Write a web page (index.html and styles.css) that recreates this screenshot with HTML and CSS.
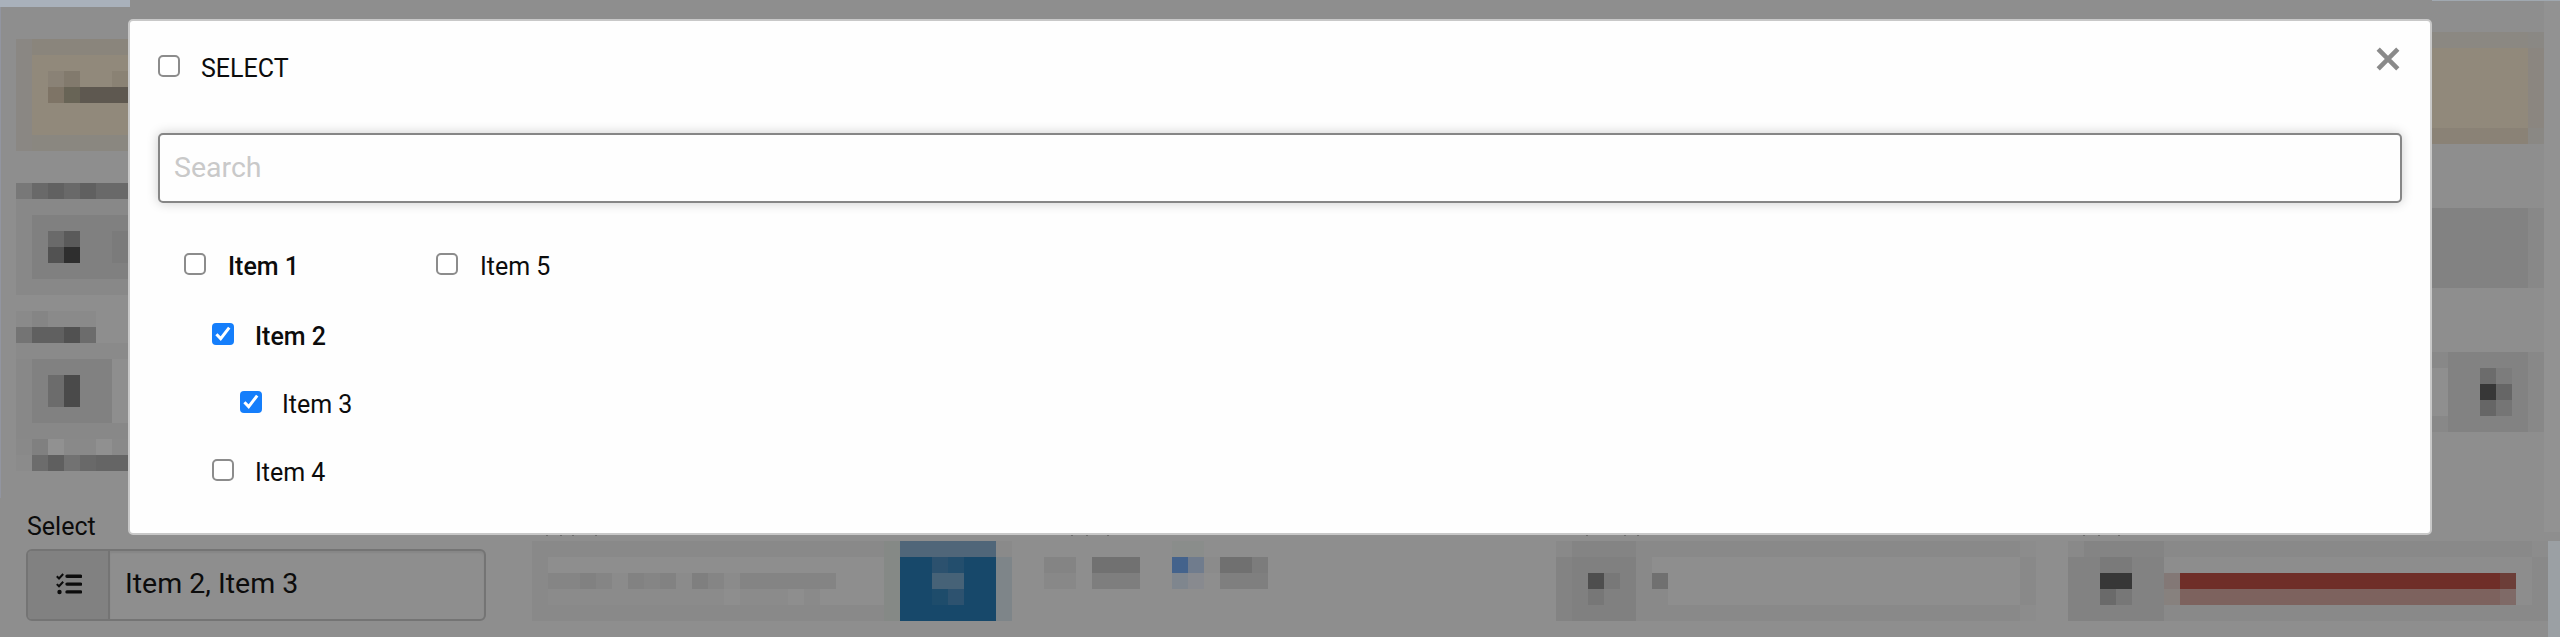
FILE: index.html
```
<!DOCTYPE html>
<html lang="en">
<head>
<meta charset="utf-8">
<title>Select</title>
<link rel="stylesheet" href="styles.css">
</head>
<body>
<div class="page">
  <svg class="mosaic" viewBox="0 0 2560 637" shape-rendering="crispEdges" aria-hidden="true">
    <!-- page edges -->
    <rect x="0" y="0" width="130" height="7" fill="#a9b1bb"/>
    <rect x="0" y="7" width="1" height="491" fill="#9295a0"/>
    <rect x="2432" y="0" width="128" height="1" fill="#a0a8b0"/>
    <rect x="2544" y="1" width="16" height="531" fill="#929292"/>
    <rect x="2548" y="541" width="12" height="96" fill="#9ba0a4"/>
    <!-- notice, left end -->
    <rect x="16" y="39" width="112" height="112" fill="#8a8783"/>
    <rect x="32" y="39" width="96" height="16" fill="#8a857c"/>
    <rect x="32" y="55" width="96" height="80" fill="#91897b"/>
    <rect x="32" y="135" width="96" height="16" fill="#8a8780"/>
    <rect x="48" y="71" width="16" height="16" fill="#8a8276"/>
    <rect x="64" y="71" width="16" height="16" fill="#827a6d"/>
    <rect x="112" y="71" width="16" height="16" fill="#8a8274"/>
    <rect x="48" y="87" width="16" height="16" fill="#7e7466"/>
    <rect x="64" y="87" width="16" height="16" fill="#686456"/>
    <rect x="80" y="87" width="48" height="16" fill="#5e5850"/>
    <!-- first field, left end -->
    <rect x="16" y="183" width="16" height="16" fill="#787878"/>
    <rect x="32" y="183" width="96" height="16" fill="#696969"/>
    <rect x="48" y="183" width="16" height="16" fill="#616161"/>
    <rect x="80" y="183" width="16" height="16" fill="#606060"/>
    <rect x="16" y="199" width="112" height="96" fill="#888888"/>
    <rect x="32" y="215" width="96" height="64" fill="#808080"/>
    <rect x="48" y="231" width="16" height="16" fill="#6a6a6a"/>
    <rect x="64" y="231" width="16" height="16" fill="#5a5a5a"/>
    <rect x="48" y="247" width="16" height="16" fill="#525252"/>
    <rect x="64" y="247" width="16" height="16" fill="#2e2e2e"/>
    <rect x="112" y="231" width="16" height="32" fill="#7b7b7b"/>
    <!-- second field, left end -->
    <rect x="16" y="311" width="80" height="16" fill="#8a8a8a"/>
    <rect x="32" y="311" width="16" height="16" fill="#858585"/>
    <rect x="16" y="327" width="16" height="16" fill="#747474"/>
    <rect x="32" y="327" width="32" height="16" fill="#606060"/>
    <rect x="64" y="327" width="16" height="16" fill="#515151"/>
    <rect x="80" y="327" width="16" height="16" fill="#6c6c6c"/>
    <rect x="16" y="343" width="112" height="16" fill="#8a8a8a"/>
    <rect x="16" y="359" width="16" height="64" fill="#888888"/>
    <rect x="32" y="359" width="80" height="64" fill="#818181"/>
    <rect x="48" y="375" width="16" height="32" fill="#6c6c6c"/>
    <rect x="64" y="375" width="16" height="32" fill="#4a4a4a"/>
    <rect x="16" y="423" width="112" height="16" fill="#888888"/>
    <rect x="16" y="439" width="112" height="16" fill="#898989"/>
    <rect x="32" y="439" width="16" height="16" fill="#808080"/>
    <rect x="48" y="439" width="16" height="16" fill="#919191"/>
    <rect x="96" y="439" width="16" height="16" fill="#909090"/>
    <rect x="16" y="455" width="16" height="16" fill="#8b8b8b"/>
    <rect x="32" y="455" width="16" height="16" fill="#6c6c6c"/>
    <rect x="48" y="455" width="16" height="16" fill="#5f5f5f"/>
    <rect x="64" y="455" width="16" height="16" fill="#727272"/>
    <rect x="80" y="455" width="16" height="16" fill="#696969"/>
    <rect x="96" y="455" width="32" height="16" fill="#656565"/>
    <!-- notice, right end -->
    <rect x="2432" y="32" width="112" height="112" fill="#8a8884"/>
    <rect x="2432" y="32" width="96" height="16" fill="#8b8882"/>
    <rect x="2432" y="48" width="96" height="80" fill="#91897b"/>
    <rect x="2432" y="128" width="96" height="16" fill="#8a8276"/>
    <rect x="2528" y="48" width="16" height="80" fill="#8b8680"/>
    <!-- fields, right end -->
    <rect x="2432" y="208" width="112" height="80" fill="#888888"/>
    <rect x="2432" y="208" width="96" height="80" fill="#828282"/>
    <rect x="2432" y="352" width="112" height="80" fill="#888888"/>
    <rect x="2432" y="368" width="16" height="48" fill="#8f8f8f"/>
    <rect x="2448" y="352" width="80" height="80" fill="#828282"/>
    <rect x="2480" y="368" width="16" height="16" fill="#6c6c6c"/>
    <rect x="2496" y="368" width="16" height="16" fill="#7c7c7c"/>
    <rect x="2480" y="384" width="16" height="16" fill="#373737"/>
    <rect x="2496" y="384" width="16" height="16" fill="#666666"/>
    <rect x="2480" y="400" width="16" height="16" fill="#666666"/>
    <rect x="2496" y="400" width="16" height="16" fill="#757575"/>
    <!-- label descenders below the dialog -->
    <path fill="#6c6c6c" d="M546 535h2v1h-2zM560 535h2v1h-2zM572 535h2v1h-2zM595 535h2v1h-2zM1071 535h2v1h-2zM1086 535h2v1h-2zM1107 535h2v1h-2zM1586 535h2v1h-2zM1624 535h2v1h-2zM1637 535h2v1h-2zM2083 535h2v1h-2zM2098 535h2v1h-2zM2118 535h2v1h-2z"/>
    <!-- date field with blue button -->
    <rect x="532" y="541" width="352" height="80" fill="#898989"/>
    <rect x="548" y="557" width="352" height="48" fill="#8e8e8e"/>
    <rect x="548" y="573" width="64" height="16" fill="#858585"/>
    <rect x="580" y="573" width="16" height="16" fill="#818181"/>
    <rect x="612" y="573" width="128" height="16" fill="#8b8b8b"/>
    <rect x="628" y="573" width="48" height="16" fill="#828282"/>
    <rect x="644" y="573" width="16" height="16" fill="#858585"/>
    <rect x="692" y="573" width="16" height="16" fill="#7f7f7f"/>
    <rect x="708" y="573" width="16" height="16" fill="#858585"/>
    <rect x="740" y="573" width="96" height="16" fill="#848484"/>
    <rect x="548" y="589" width="176" height="16" fill="#8b8b8b"/>
    <rect x="740" y="589" width="48" height="16" fill="#8b8b8b"/>
    <rect x="804" y="589" width="16" height="16" fill="#8a8a8a"/>
    <rect x="884" y="541" width="16" height="80" fill="#858986"/>
    <rect x="900" y="541" width="96" height="16" fill="#506679"/>
    <rect x="900" y="557" width="96" height="64" fill="#17486a"/>
    <rect x="932" y="557" width="16" height="16" fill="#2c516e"/>
    <rect x="948" y="557" width="16" height="16" fill="#234e6d"/>
    <rect x="932" y="573" width="32" height="16" fill="#466277"/>
    <rect x="932" y="589" width="16" height="16" fill="#1e4c6b"/>
    <rect x="948" y="589" width="16" height="16" fill="#2d526f"/>
    <rect x="996" y="541" width="16" height="16" fill="#8a8a8a"/>
    <rect x="996" y="557" width="16" height="64" fill="#7e8589"/>
    <!-- radio pair -->
    <rect x="1044" y="557" width="32" height="16" fill="#848484"/>
    <rect x="1044" y="573" width="32" height="16" fill="#888888"/>
    <rect x="1092" y="557" width="48" height="16" fill="#717171"/>
    <rect x="1092" y="573" width="48" height="16" fill="#7e7e7e"/>
    <rect x="1172" y="541" width="32" height="16" fill="#8a8d8b"/>
    <rect x="1172" y="557" width="16" height="16" fill="#44638c"/>
    <rect x="1188" y="557" width="16" height="16" fill="#707c8d"/>
    <rect x="1172" y="573" width="16" height="16" fill="#7f868e"/>
    <rect x="1188" y="573" width="16" height="16" fill="#888a8f"/>
    <rect x="1204" y="557" width="16" height="16" fill="#8b8b8b"/>
    <rect x="1220" y="557" width="32" height="16" fill="#707070"/>
    <rect x="1252" y="557" width="16" height="16" fill="#7c7c7c"/>
    <rect x="1220" y="573" width="48" height="16" fill="#7f7f7f"/>
    <!-- amount field -->
    <rect x="1556" y="541" width="480" height="80" fill="#898989"/>
    <rect x="2020" y="541" width="16" height="16" fill="#8c8c8c"/>
    <rect x="2020" y="605" width="16" height="16" fill="#8c8c8c"/>
    <rect x="1652" y="557" width="368" height="48" fill="#8e8e8e"/>
    <rect x="1572" y="541" width="64" height="16" fill="#848484"/>
    <rect x="1556" y="557" width="16" height="64" fill="#838383"/>
    <rect x="1572" y="557" width="64" height="64" fill="#808080"/>
    <rect x="1588" y="573" width="16" height="16" fill="#4e4e4e"/>
    <rect x="1604" y="573" width="16" height="16" fill="#787878"/>
    <rect x="1588" y="589" width="16" height="16" fill="#777777"/>
    <rect x="1652" y="573" width="16" height="16" fill="#707070"/>
    <rect x="1652" y="589" width="16" height="16" fill="#898989"/>
    <!-- field with red value -->
    <rect x="2068" y="541" width="480" height="80" fill="#898989"/>
    <rect x="2532" y="541" width="16" height="16" fill="#8c8c8c"/>
    <rect x="2164" y="557" width="368" height="48" fill="#8d8d8d"/>
    <rect x="2084" y="541" width="80" height="16" fill="#848484"/>
    <rect x="2068" y="557" width="96" height="64" fill="#828282"/>
    <rect x="2100" y="557" width="32" height="16" fill="#7a7a7a"/>
    <rect x="2100" y="573" width="32" height="16" fill="#373737"/>
    <rect x="2100" y="589" width="16" height="16" fill="#6a6a6a"/>
    <rect x="2116" y="589" width="16" height="16" fill="#777777"/>
    <rect x="2164" y="573" width="16" height="16" fill="#837876"/>
    <rect x="2180" y="573" width="320" height="16" fill="#6f2e28"/>
    <rect x="2500" y="573" width="16" height="16" fill="#6c3e38"/>
    <rect x="2164" y="589" width="16" height="16" fill="#87817e"/>
    <rect x="2180" y="589" width="320" height="16" fill="#7d625e"/>
    <rect x="2500" y="589" width="16" height="16" fill="#7f6a67"/>
  </svg>

  <main class="dialog" role="dialog">
    <header class="dialog-head">
      <label class="option option-all"><input class="check" type="checkbox"><span>SELECT</span></label>
      <button class="close" aria-label="Close">
        <svg class="close-icon" viewBox="0 0 24 24"><path d="M2.2 2.2 21.8 21.8M21.8 2.2 2.2 21.8"/></svg>
      </button>
    </header>
    <input class="search" type="text" placeholder="Search">
    <div class="columns">
      <div class="column">
        <label class="option parent"><input class="check" type="checkbox"><span>Item 1</span></label>
        <label class="option parent level-2"><input class="check" type="checkbox" checked><span>Item 2</span></label>
        <label class="option level-3"><input class="check" type="checkbox" checked><span>Item 3</span></label>
        <label class="option level-2"><input class="check" type="checkbox"><span>Item 4</span></label>
      </div>
      <div class="column">
        <label class="option last"><input class="check" type="checkbox"><span>Item 5</span></label>
      </div>
    </div>
  </main>

  <section class="field">
    <div class="field-label">Select</div>
    <div class="group">
      <div class="addon">
        <svg class="list-icon" viewBox="0 0 26 22">
          <path class="bar" d="M11 3.3h13.6M11 11.1h13.6M11 18.9h13.6"/>
          <path class="tick" d="M.8 3.3 3 5.5 7.2 1M.8 11.1 3 13.3 7.2 8.8"/>
          <circle cx="3.5" cy="19" r="2.2"/>
        </svg>
      </div>
      <div class="value">Item 2, Item 3</div>
    </div>
  </section>
</div>
</body>
</html>
```
FILE: styles.css
```
* { box-sizing: border-box; }

body {
  margin: 0;
  font-family: Roboto, "Liberation Sans", sans-serif;
  font-size: 25px;
  line-height: 31px;
  color: #0c0c0c;
}

.page {
  position: relative;
  width: 2560px;
  height: 637px;
  padding-top: 19px;
  overflow: hidden;
  background: #8e8e8e;
}

.mosaic {
  position: absolute;
  inset: 0;
  width: 2560px;
  height: 637px;
}

.dialog {
  position: relative;
  width: 2304px;
  height: 516px;
  margin: 0 auto;
  padding: 26px 28px 0;
  background: #fefefe;
  border: 2px solid #c8c8c8;
  border-radius: 5px;
}

.dialog-head {
  display: flex;
  justify-content: space-between;
  height: 86px;
}

.option {
  display: flex;
  align-items: center;
  height: 31px;
  gap: 22px;
}

.option-all { margin-top: 6px; gap: 21px; }

.check {
  appearance: none;
  flex: none;
  width: 22px;
  height: 22px;
  margin: 0 0 5px;
  border: 2px solid #8c8c8c;
  border-radius: 5px;
  background: #ffffff;
}

.check:checked {
  border: 0;
  border-radius: 4px;
  background: #157efb url("data:image/svg+xml,%3Csvg xmlns='http://www.w3.org/2000/svg' viewBox='0 0 22 22'%3E%3Cpath d='M4.4 11.2 8.7 15.6 17.2 4.6' fill='none' stroke='white' stroke-width='3'/%3E%3C/svg%3E");
}

.close {
  width: 24px;
  height: 24px;
  margin-right: 2px;
  padding: 0;
  border: 0;
  background: none;
}

.close-icon {
  display: block;
  width: 24px;
  height: 24px;
  fill: none;
  stroke: #8a8a8a;
  stroke-width: 4.6;
}

.search {
  display: block;
  width: 2244px;
  height: 70px;
  padding: 0 14px 2px;
  border: 2px solid #868686;
  border-radius: 5px;
  background: #fefefe;
  box-shadow: 0 0 12px rgba(0, 0, 0, 0.2);
  font: 28.5px Roboto, "Liberation Sans", sans-serif;
}

.search::placeholder { color: #c9c9c9; }

.columns {
  display: flex;
  padding: 48px 26px 0;
}

.column {
  display: flex;
  flex-direction: column;
  gap: 37px;
  width: 252px;
}

.parent { font-weight: 500; margin-bottom: 2px; }
.level-2 { margin-left: 28px; gap: 21px; }
.level-3 { margin-left: 56px; gap: 20px; }
.parent.level-2 { margin-bottom: 0; }

.field {
  position: relative;
  width: 460px;
  margin: -25px 0 0 26px;
}

.field-label {
  height: 39px;
  padding: 1px 0 0 1px;
}

.group {
  display: flex;
  height: 72px;
  border: 2px solid #747474;
  border-radius: 6px;
}

.addon {
  display: flex;
  align-items: center;
  justify-content: center;
  width: 82px;
  padding: 0 0 2px 2px;
  border-right: 2px solid #747474;
  border-radius: 4px 0 0 4px;
  background: #818181;
}

.list-icon { width: 26px; height: 22px; fill: #0c0c0c; }
.bar { stroke: #0c0c0c; stroke-width: 3.4; stroke-linecap: round; }
.tick { fill: none; stroke: #0c0c0c; stroke-width: 2; }

.value {
  flex: 1;
  padding: 0 14px 0 15px;
  font-size: 28.5px;
  line-height: 66px;
  border-radius: 0 4px 4px 0;
  box-shadow: inset 0 2px 2px rgba(0, 0, 0, 0.06);
}
```
